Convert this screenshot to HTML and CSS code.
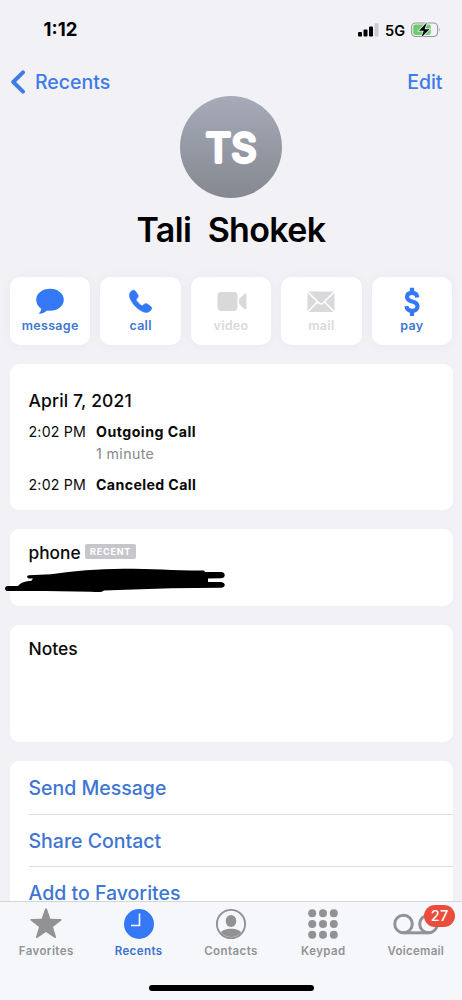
FILE: index.html
```html
<!DOCTYPE html>
<html lang="en">
<head>
<meta charset="utf-8">
<title>Tali Shokek</title>
<link rel="stylesheet" href="styles.css">
</head>
<body>
<div class="screen">
  <header class="status">
    <span class="clock">1:12</span>
    <div class="indicators">
      <svg class="signal" width="21" height="14" viewBox="0 0 21 14"><rect x="0" y="9" width="4" height="4.500" rx="1"/><rect x="5.500" y="6.500" width="4" height="7" rx="1"/><rect x="11" y="3.500" width="4" height="10" rx="1"/><rect class="faint" x="16.500" y="0.300" width="4" height="13.200" rx="1"/></svg>
      <span class="network">5G</span>
      <svg class="battery" width="30" height="16" viewBox="0 0 30 16"><rect x=".6" y="1" width="26" height="13.500" rx="4" fill="none" stroke="#98989c" stroke-width="1.100"/><rect x="2.200" y="2.600" width="17.600" height="10.300" rx="2.300" fill="#6cca71"/><path d="M28.200 5.800q1.400 1.900 0 4z" fill="#98989c"/><path d="M15.800.5 8 8.700h4.700L10.300 15.500l8.200-8.300h-4.900z" fill="#000" stroke="#f1f1f6" stroke-width="1.600" paint-order="stroke"/></svg>
    </div>
  </header>
  <nav class="nav">
    <a class="back"><svg width="16" height="26" viewBox="0 0 16 26"><path d="M13 2.400 3.200 12l9.800 9.600" fill="none" stroke="currentColor" stroke-width="3.900" stroke-linecap="round" stroke-linejoin="round"/></svg><span class="back-label">Recents</span></a>
    <a class="edit">Edit</a>
  </nav>
  <section class="profile">
    <svg class="avatar" width="102" height="102" viewBox="0 0 102 102"><defs><linearGradient id="shade" x2="0" y2="1"><stop stop-color="#a6abb9"/><stop offset="1" stop-color="#858890"/></linearGradient></defs><circle cx="51" cy="51" r="51" fill="url(#shade)"/><text class="initials" x="51.500" y="65.800" text-anchor="middle">TS</text></svg>
    <h1 class="name">Tali  Shokek</h1>
  </section>
  <section class="actions">
    <div class="action"><svg class="glyph" width="30" height="30" viewBox="0 0 30 30"><path d="M15 1.700c7.700 0 13.800 4.700 13.800 11S22.700 23.700 15 23.700c-1 0-2-.1-3-.2-1.900 1.700-4.700 3.200-7.200 3.300-.7 0-.9-.5-.4-1 1.100-1.200 1.700-2.500 1.900-4.100C3.200 19.700 1.200 16.500 1.200 12.700c0-6.300 6.100-11 13.800-11z"/></svg><span class="caption">message</span></div>
    <div class="action"><svg class="glyph" width="30" height="30" viewBox="0 0 30 30"><path d="M5.400 4.100c1.500-1.300 3.100-1.200 4.300.4l2 2.900c.9 1.300.7 2.500-.3 3.600l-.9 1c-.4.500-.4.900-.1 1.400.8 1.400 3.700 4.300 5.200 5.100.5.300.9.200 1.400-.2l1-.9c1.100-1 2.300-1.100 3.500-.3l3 2.100c1.600 1.100 1.600 2.700.3 4.100-2.100 2.300-4.700 2.700-7.700 1.400C11.600 22.400 7 17.700 4.300 12 3 9 3 6.300 5.400 4.100z" stroke="currentColor" stroke-width=".6"/></svg><span class="caption">call</span></div>
    <div class="action off"><svg class="glyph" width="32" height="30" viewBox="0 0 32 30"><rect x="2.500" y="5" width="20" height="19" rx="4"/><path d="M24 12.200l5-5c1.200-1.100 2.500-.7 2.500.8v13c0 1.500-1.300 1.900-2.500.8l-5-5z"/></svg><span class="caption">video</span></div>
    <div class="action off"><svg class="glyph" width="30" height="30" viewBox="0 0 30 30"><rect x="1.500" y="4.500" width="27" height="20.500" rx="1"/><path d="M1.500 4.800 13 16q2 1.900 4 0L28.500 4.800M1.500 25l9.900-10M28.500 25l-9.900-10" fill="none" stroke="#fff" stroke-width="1.600"/></svg><span class="caption">mail</span></div>
    <div class="action"><svg class="glyph" width="30" height="30" viewBox="0 0 30 30"><path d="M15 .8v4M15 25v4" stroke="currentColor" stroke-width="4.200" fill="none"/><path d="M20.300 10.500c-.2-3-2-4.600-5.200-4.600-3 0-5 1.500-5 4.200 0 2.700 2.100 3.700 5 4.400 3.600.9 5.400 2 5.400 4.800 0 2.900-2.100 4.600-5.400 4.600-3.400 0-5.400-1.700-5.600-4.700" fill="none" stroke="currentColor" stroke-width="4.200"/></svg><span class="caption">pay</span></div>
  </section>
  <main class="cards">
    <section class="card history">
      <h2 class="date">April 7, 2021</h2>
      <div class="entry"><span class="time">2:02 PM</span><b class="kind outgoing">Outgoing Call</b></div>
      <div class="duration">1 minute</div>
      <div class="entry"><span class="time">2:02 PM</span><b class="kind">Canceled Call</b></div>
    </section>
    <section class="card phone">
      <span class="phone-label">phone</span><span class="recent">RECENT</span>
      <svg class="scribble" width="226" height="32" viewBox="0 0 226 32"><path d="M28 7.300 50 6.300Q84 1 122 .8c30 0 50 1.800 81 1.700l1 1.500 16-.1c5 .2 5 6 0 6.300l-13 .4v3.300h13c5 .5 5 5.400 0 5.800l-26 .4c-32 .1-62 2-91 2.300-2 2.200-7 1.500-13 1.300C63 23.300 35 22.500 7 23.100c-4-.3-4-5.200 0-5.200h10c3-3.500 7-4.800 13.500-5.200l1.500-2.200h-4c-2.500-.5-2.500-3 0-3.200z"/></svg>
    </section>
    <section class="card notes">Notes</section>
    <section class="card links">
      <a class="link send">Send Message</a>
      <a class="link share">Share Contact</a>
      <a class="link add">Add to Favorites</a>
    </section>
  </main>
  <footer class="tabs">
    <div class="tab"><svg class="tab-icon" width="36" height="34" viewBox="0 0 36 34"><path d="M18 1.200c.5 0 .8.300 1 .8l3.400 9.700 10.200.2c1.200 0 1.500 1 .6 1.700L25 19.900l3 9.900c.3 1.100-.5 1.700-1.500 1L18 24.900l-8.500 5.900c-1 .7-1.800.1-1.500-1l3-9.900-8.200-6.300c-.9-.7-.6-1.700.6-1.700l10.200-.2L17 2c.2-.5.5-.8 1-.8z"/></svg><span class="fav">Favorites</span></div>
    <div class="tab current"><svg class="tab-icon" width="34" height="34" viewBox="0 0 34 34"><circle cx="17" cy="17" r="15"/><path d="M17.500 6.500v12H9" fill="none" stroke="#fff" stroke-width="1.600"/></svg><span class="rec">Recents</span></div>
    <div class="tab"><svg class="tab-icon" width="34" height="34" viewBox="0 0 34 34"><defs><clipPath id="portrait"><circle cx="17" cy="17" r="13"/></clipPath></defs><circle cx="17" cy="17" r="14.100" fill="none" stroke="currentColor" stroke-width="1.900"/><g clip-path="url(#portrait)"><ellipse cx="17" cy="14" rx="5.300" ry="6"/><path d="M6 28c1-5 6-6.200 11-6.200S27 23 28 28l-5 5H11z"/></g></svg><span class="con">Contacts</span></div>
    <div class="tab"><svg class="tab-icon" width="34" height="34" viewBox="0 0 34 34"><circle cx="6.200" cy="6.300" r="4"/><circle cx="17" cy="6.300" r="4"/><circle cx="27.800" cy="6.300" r="4"/><circle cx="6.200" cy="17" r="4"/><circle cx="17" cy="17" r="4"/><circle cx="27.800" cy="17" r="4"/><circle cx="6.200" cy="27.700" r="4"/><circle cx="17" cy="27.700" r="4"/><circle cx="27.800" cy="27.700" r="4"/></svg><span class="key">Keypad</span></div>
    <div class="tab"><svg class="tab-icon" width="48" height="34" viewBox="0 0 48 34"><g fill="none" stroke="currentColor" stroke-width="3"><circle cx="11.500" cy="17" r="8.800"/><circle cx="36.500" cy="17" r="8.800"/><path d="M11.500 25.800h25"/></g></svg><span class="voi">Voicemail</span><span class="badge">27</span></div>
    <div class="home"></div>
  </footer>
</div>
</body>
</html>
```

FILE: styles.css
```css
* { box-sizing: border-box; }
body { margin: 0; background: #f1f1f6; font-family: Inter, "Liberation Sans", sans-serif; color: #0a0a0a; }
svg { display: block; fill: currentColor; flex: none; }
.screen { width: 462px; height: 1000px; display: flex; flex-direction: column; overflow: hidden; background: #f1f1f6; }

.status { height: 60px; flex: none; display: flex; justify-content: space-between; padding: 0 21px 0 43.5px; color: #000; }
.clock { font-size: 18.5px; font-weight: 700; line-height: 59px; letter-spacing: 0; }
.indicators { display: flex; align-items: center; height: 60px; }
.signal .faint { fill: #cbcbd0; }
.network { font-size: 14.5px; font-weight: 600; margin: 0 6px 0 6px; }

.nav { height: 36px; flex: none; display: flex; justify-content: space-between; padding: 9px 19.5px 0 10px; color: #3d7be5; font-size: 19.5px; font-weight: 500; line-height: 27px; }
.back { display: flex; gap: 9px; align-items: center; }

.profile { height: 181px; flex: none; display: flex; flex-direction: column; align-items: center; }
.initials { font-size: 39px; font-weight: 400; letter-spacing: .6px; fill: #fff; stroke: #fff; stroke-width: 3.8px; stroke-linejoin: round; }
.name { margin: 11px 0 0; font-size: 34px; line-height: 42px; font-weight: 600; letter-spacing: -.65px; word-spacing: .3px; white-space: pre; color: #000; }

.actions { flex: none; display: grid; grid-template-columns: repeat(5, 1fr); gap: 10px; padding: 0 10px; height: 68px; }
.action { display: flex; flex-direction: column; align-items: center; padding-top: 10px; background: #fff; border-radius: 10px; color: #3478f6; box-shadow: 0 0 12px rgba(70, 60, 100, .04); }
.caption { font-size: 12.5px; font-weight: 600; line-height: 18px; color: #3e76d2; letter-spacing: .3px; }
.off, .off .caption { color: #d9d9db; }

.cards { display: flex; flex-direction: column; gap: 19px; padding: 19px 9.5px 0; flex: 1; min-height: 0; overflow: hidden; }
.card { flex: none; background: #fff; border-radius: 9px; padding-left: 19px; }
.history { height: 146px; padding-top: 25px; }
.date { margin: 0; font-size: 17.5px; line-height: 24px; font-weight: 500; letter-spacing: .15px; }
.entry { display: flex; font-size: 14.2px; line-height: 22px; margin-top: 8px; letter-spacing: .2px; }
.time { width: 67.5px; }
.kind { font-weight: 700; letter-spacing: .37px; }
.outgoing { letter-spacing: .47px; }
.duration { padding-left: 67.5px; font-size: 14.2px; line-height: 22px; color: #88888b; letter-spacing: .38px; }
.duration + .entry { margin-top: 9px; }
.phone { height: 77px; position: relative; display: flex; align-items: flex-start; padding-top: 13px; }
.phone-label { font-size: 17.3px; line-height: 22px; font-weight: 500; }
.recent { margin: 1.5px 0 0 4.5px; width: 51px; height: 15.5px; border-radius: 2px; background: #c6c6cb; color: #fff; font-size: 9px; line-height: 16px; font-weight: 700; letter-spacing: .8px; text-align: center; }
.scribble { position: absolute; left: -9px; top: 38.5px; fill: #000; }
.notes { height: 117px; padding-top: 12px; font-size: 17.5px; line-height: 24px; font-weight: 500; }
.links { height: 160px; padding-top: 1px; }
.link { display: block; height: 52.5px; border-bottom: 1px solid #dedee1; font-size: 19.5px; line-height: 53px; font-weight: 500; color: #3e76d2; }

.tabs { position: relative; height: 99px; flex: none; display: grid; grid-template-columns: repeat(5, 1fr); border-top: 1px solid #d3d3d8; background: #f6f7fa; color: #929295; }
.tab { position: relative; display: flex; flex-direction: column; align-items: center; padding-top: 5px; font-size: 11.5px; font-weight: 600; line-height: 20px; letter-spacing: .42px; }
.voi { letter-spacing: .28px; }
.current { color: #3478f6; }
.current span { color: #3c72cf; }
.badge { position: absolute; left: 54.5px; top: 3px; width: 31px; height: 22px; border-radius: 11px; background: #eb4d3d; color: #fff; text-align: center; font-size: 14.5px; line-height: 22px; font-weight: 500; letter-spacing: .2px; }
.home { position: absolute; left: 149px; bottom: 9px; width: 165px; height: 6px; border-radius: 3px; background: #000; }
```
